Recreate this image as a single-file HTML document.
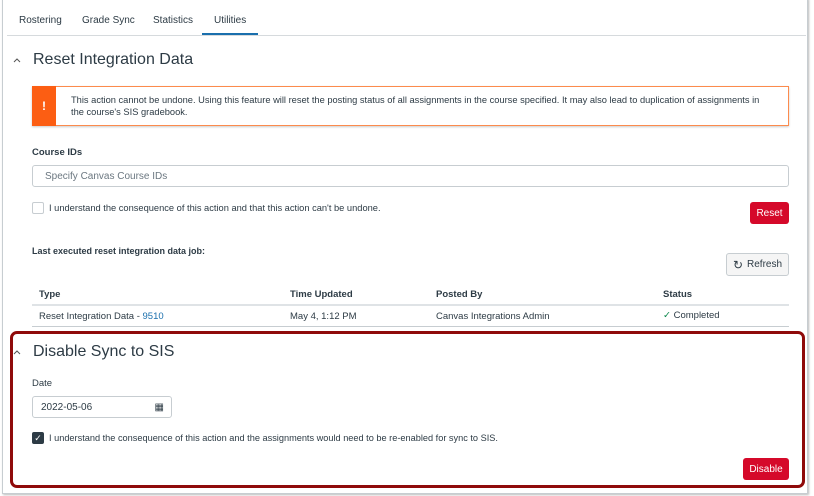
<!DOCTYPE html>
<html><head><meta charset="utf-8"><style>
*{box-sizing:border-box;margin:0;padding:0}
body{width:814px;height:496px;background:#fff;font-family:"Liberation Sans",sans-serif;color:#2d3b45;position:relative;overflow:hidden}
.a{position:absolute;white-space:nowrap}
.frame{position:absolute;left:2px;top:-2px;width:806px;height:496px;border:1px solid #c7cdd1;box-shadow:1px 1px 2px #bbb}
.t{font-size:10px}
.h{font-size:16px;color:#2d3b45}
.btn{position:absolute;background:#d5092a;color:#fff;font-size:10px;border-radius:3px;display:flex;align-items:center;justify-content:center}
.inp{position:absolute;border:1px solid #c7cdd1;border-radius:3px;background:#fff;font-size:10px;display:flex;align-items:center;padding-left:12px}
.line{position:absolute;height:1px;background:#dfe3e6}
</style></head><body>
<div class="frame"></div>
<div class="a t" style="left:19px;top:15px">Rostering</div>
<div class="a t" style="left:82px;top:15px">Grade Sync</div>
<div class="a t" style="left:153px;top:15px">Statistics</div>
<div class="a t" style="left:214px;top:15px">Utilities</div>
<div class="line" style="left:7px;top:35px;width:799px;background:#d6dadd"></div>
<div class="a" style="left:202px;top:33px;width:56px;height:2px;background:#1a6fad"></div>
<svg class="a" style="left:13px;top:57px" width="8" height="6"><path d="M1 5 L4 2 L7 5" fill="none" stroke="#555" stroke-width="1"/></svg>
<div class="a h" style="left:33px;top:51px">Reset Integration Data</div>
<div class="a" style="left:32px;top:86px;width:757px;height:40px;border:1px solid #fc8b4d;box-shadow:0 1px 2px #ccc"></div>
<div class="a" style="left:32px;top:86px;width:24px;height:40px;background:#fc5e13;color:#fff;font-weight:bold;font-size:12px;display:flex;align-items:center;justify-content:center">!</div>
<div class="a" style="left:71px;top:94px;font-size:9.3px;line-height:12px;color:#2d3b45">This action cannot be undone. Using this feature will reset the posting status of all assignments in the course specified. It may also lead to duplication of assignments in<br>the course's SIS gradebook.</div>
<div class="a t" style="left:32px;top:147px;font-weight:bold;font-size:9.5px">Course IDs</div>
<div class="inp" style="left:32px;top:165px;width:757px;height:22px;color:#6b7780">Specify Canvas Course IDs</div>
<div class="a" style="left:32px;top:202px;width:12px;height:12px;border:1px solid #c7cdd1;border-radius:2px"></div>
<div class="a" style="left:49px;top:203px;font-size:9.3px">I understand the consequence of this action and that this action can't be undone.</div>
<div class="btn" style="left:750px;top:202px;width:39px;height:22px">Reset</div>
<div class="a" style="left:32px;top:246px;font-size:9px;font-weight:bold">Last executed reset integration data job:</div>
<div class="a" style="left:726px;top:253px;width:63px;height:23px;background:#f5f5f5;border:1px solid #c7cdd1;border-radius:3px;font-size:10px;display:flex;align-items:center;justify-content:center;gap:4px"><span style="font-size:12px">&#8635;</span>Refresh</div>
<div class="a" style="left:39px;top:289px;font-size:9.5px;font-weight:bold">Type</div>
<div class="a" style="left:290px;top:289px;font-size:9.5px;font-weight:bold">Time Updated</div>
<div class="a" style="left:436px;top:289px;font-size:9.5px;font-weight:bold">Posted By</div>
<div class="a" style="left:663px;top:289px;font-size:9.5px;font-weight:bold">Status</div>
<div class="line" style="left:32px;top:304px;width:757px;height:2px"></div>
<div class="a" style="left:39px;top:311px;font-size:9.5px">Reset Integration Data - <span style="color:#1a6fad">9510</span></div>
<div class="a" style="left:290px;top:311px;font-size:9.5px">May 4, 1:12 PM</div>
<div class="a" style="left:436px;top:311px;font-size:9.5px">Canvas Integrations Admin</div>
<div class="a" style="left:663px;top:310px;font-size:9.5px"><span style="color:#0b874b">&#10003;</span> Completed</div>
<div class="line" style="left:32px;top:326px;width:757px;background:#c7cdd1"></div>
<div class="a" style="left:10px;top:331px;width:795px;height:157px;border:3px solid #8f0a0a;border-radius:7px"></div>
<svg class="a" style="left:13px;top:349px" width="8" height="6"><path d="M1 5 L4 2 L7 5" fill="none" stroke="#555" stroke-width="1"/></svg>
<div class="a h" style="left:33px;top:343px">Disable Sync to SIS</div>
<div class="a" style="left:32px;top:378px;font-size:9.5px">Date</div>
<div class="inp" style="left:32px;top:396px;width:140px;height:22px;padding-left:8px;font-size:10px">2022-05-06<span style="position:absolute;right:7px;font-size:10px">&#9638;</span></div>
<div class="a" style="left:32px;top:432px;width:12px;height:12px;background:#2d3b45;border-radius:2px;color:#fff;font-size:9px;display:flex;align-items:center;justify-content:center">&#10003;</div>
<div class="a" style="left:49px;top:433px;font-size:9.2px">I understand the consequence of this action and the assignments would need to be re-enabled for sync to SIS.</div>
<div class="btn" style="left:743px;top:458px;width:46px;height:22px">Disable</div>
</body></html>
